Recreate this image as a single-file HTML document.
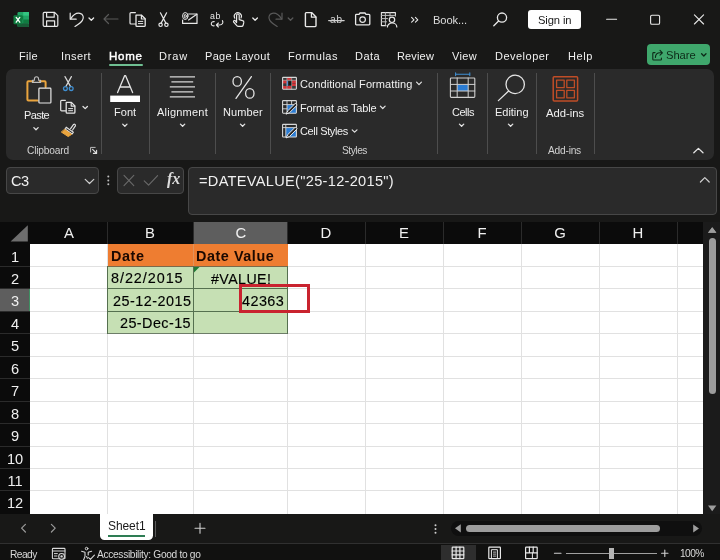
<!DOCTYPE html><html><head><meta charset="utf-8"><title>Excel</title><style>
html,body{margin:0;padding:0}body{width:720px;height:560px;overflow:hidden;position:relative;background:#181817;font-family:"Liberation Sans",sans-serif;}
.t{position:absolute;white-space:nowrap;line-height:20px;height:20px;will-change:transform;}
.a{position:absolute}svg{position:absolute;overflow:visible}
</style></head><body>
<!-- ribbon panel -->
<div class="a" style="left:6px;top:68.5px;width:708px;height:91px;border-radius:7px;background:#2a2a2a"></div>
<!-- home underline -->
<div class="a" style="left:109px;top:63.8px;width:34.2px;height:2px;border-radius:1px;background:#6fbf92"></div>
<!-- share -->
<div class="a" style="left:646.7px;top:44px;width:63.5px;height:21px;border-radius:4px;background:#3fa76c"></div>
<!-- sign in -->
<div class="a" style="left:528px;top:10px;width:52.5px;height:19px;border-radius:3px;background:#ffffff"></div>
<!-- ribbon separators -->
<div class="a" style="left:100.5px;top:72.5px;width:1px;height:81.5px;background:#4d4d4d"></div>
<div class="a" style="left:149px;top:72.5px;width:1px;height:81.5px;background:#4d4d4d"></div>
<div class="a" style="left:215px;top:72.5px;width:1px;height:81.5px;background:#4d4d4d"></div>
<div class="a" style="left:270px;top:72.5px;width:1px;height:81.5px;background:#4d4d4d"></div>
<div class="a" style="left:437px;top:72.5px;width:1px;height:81.5px;background:#4d4d4d"></div>
<div class="a" style="left:487px;top:72.5px;width:1px;height:81.5px;background:#4d4d4d"></div>
<div class="a" style="left:536px;top:72.5px;width:1px;height:81.5px;background:#4d4d4d"></div>
<div class="a" style="left:594px;top:72.5px;width:1px;height:81.5px;background:#4d4d4d"></div>
<!-- name box / fx box / formula box -->
<div class="a" style="left:6px;top:167px;width:91px;height:24.5px;border:1px solid #474747;border-radius:4px;background:#2a2a2a"></div>
<div class="a" style="left:117px;top:167px;width:65.3px;height:24.5px;border:1px solid #474747;border-radius:4px;background:#2a2a2a"></div>
<div class="a" style="left:188px;top:167.2px;width:526.5px;height:46.3px;border:1px solid #474747;border-radius:4px;background:#2a2a2a"></div>
<!-- grid -->
<div class="a" style="left:0;top:222px;width:702.7px;height:292px;background:#0b0b0b"></div>
<div class="a" style="left:29.5px;top:244px;width:673.2px;height:270px;background:#ffffff"></div>
<!-- selected headers -->
<div class="a" style="left:193.3px;top:222px;width:94.4px;height:21.5px;background:#5e5e5e"></div>
<div class="a" style="left:0;top:289px;width:29.5px;height:22.4px;background:#5e5e5e"></div>
<!-- scroll area right -->
<div class="a" style="left:702.7px;top:222px;width:17.3px;height:292px;background:#1b1b1b"></div>
<div class="a" style="left:708.5px;top:238px;width:7.5px;height:156px;border-radius:4px;background:#9d9d9d"></div>
<!-- sheet tab -->
<div class="a" style="left:99.9px;top:513.5px;width:53.5px;height:26.7px;border-radius:0 0 4.5px 4.5px;background:#ffffff"></div>
<div class="a" style="left:108.1px;top:535.2px;width:37px;height:1.9px;background:#2e7d54"></div>
<div class="a" style="left:155.4px;top:520.5px;width:1px;height:16px;background:#5a5a5a"></div>
<!-- hscroll -->
<div class="a" style="left:450.8px;top:520.6px;width:251.7px;height:15.6px;border-radius:8px;background:#0f0f0f"></div>
<div class="a" style="left:466px;top:524.6px;width:194px;height:7.5px;border-radius:4px;background:#9d9d9d"></div>
<!-- status bar -->
<div class="a" style="left:0;top:543.5px;width:720px;height:16.5px;background:#111110"></div><div class="a" style="left:0;top:543px;width:720px;height:1px;background:#303030"></div>
<div class="a" style="left:441px;top:545px;width:35px;height:15px;background:#2e2e2e"></div>
<div class="a" style="left:566px;top:552.7px;width:91px;height:1px;background:#a0a0a0"></div>
<div class="a" style="left:609.3px;top:547.9px;width:4.7px;height:11px;background:#b5b5b5"></div>
<div class="a" style="left:107.00px;top:244.00px;width:1.00px;height:270.00px;background:#e1e1e1;"></div>
<div class="a" style="left:107.00px;top:222.00px;width:1.00px;height:21.70px;background:#2b2b2b;"></div>
<div class="a" style="left:192.80px;top:244.00px;width:1.00px;height:270.00px;background:#e1e1e1;"></div>
<div class="a" style="left:192.80px;top:222.00px;width:1.00px;height:21.70px;background:#2b2b2b;"></div>
<div class="a" style="left:287.20px;top:244.00px;width:1.00px;height:270.00px;background:#e1e1e1;"></div>
<div class="a" style="left:287.20px;top:222.00px;width:1.00px;height:21.70px;background:#2b2b2b;"></div>
<div class="a" style="left:364.50px;top:244.00px;width:1.00px;height:270.00px;background:#e1e1e1;"></div>
<div class="a" style="left:364.50px;top:222.00px;width:1.00px;height:21.70px;background:#2b2b2b;"></div>
<div class="a" style="left:442.50px;top:244.00px;width:1.00px;height:270.00px;background:#e1e1e1;"></div>
<div class="a" style="left:442.50px;top:222.00px;width:1.00px;height:21.70px;background:#2b2b2b;"></div>
<div class="a" style="left:520.50px;top:244.00px;width:1.00px;height:270.00px;background:#e1e1e1;"></div>
<div class="a" style="left:520.50px;top:222.00px;width:1.00px;height:21.70px;background:#2b2b2b;"></div>
<div class="a" style="left:598.50px;top:244.00px;width:1.00px;height:270.00px;background:#e1e1e1;"></div>
<div class="a" style="left:598.50px;top:222.00px;width:1.00px;height:21.70px;background:#2b2b2b;"></div>
<div class="a" style="left:676.50px;top:244.00px;width:1.00px;height:270.00px;background:#e1e1e1;"></div>
<div class="a" style="left:676.50px;top:222.00px;width:1.00px;height:21.70px;background:#2b2b2b;"></div>
<div class="a" style="left:29.50px;top:265.95px;width:673.20px;height:1.00px;background:#e1e1e1;"></div>
<div class="a" style="left:0.00px;top:265.95px;width:29.50px;height:1.00px;background:#2b2b2b;"></div>
<div class="a" style="left:29.50px;top:288.40px;width:673.20px;height:1.00px;background:#e1e1e1;"></div>
<div class="a" style="left:0.00px;top:288.40px;width:29.50px;height:1.00px;background:#2b2b2b;"></div>
<div class="a" style="left:29.50px;top:310.85px;width:673.20px;height:1.00px;background:#e1e1e1;"></div>
<div class="a" style="left:0.00px;top:310.85px;width:29.50px;height:1.00px;background:#2b2b2b;"></div>
<div class="a" style="left:29.50px;top:333.30px;width:673.20px;height:1.00px;background:#e1e1e1;"></div>
<div class="a" style="left:0.00px;top:333.30px;width:29.50px;height:1.00px;background:#2b2b2b;"></div>
<div class="a" style="left:29.50px;top:355.75px;width:673.20px;height:1.00px;background:#e1e1e1;"></div>
<div class="a" style="left:0.00px;top:355.75px;width:29.50px;height:1.00px;background:#2b2b2b;"></div>
<div class="a" style="left:29.50px;top:378.20px;width:673.20px;height:1.00px;background:#e1e1e1;"></div>
<div class="a" style="left:0.00px;top:378.20px;width:29.50px;height:1.00px;background:#2b2b2b;"></div>
<div class="a" style="left:29.50px;top:400.65px;width:673.20px;height:1.00px;background:#e1e1e1;"></div>
<div class="a" style="left:0.00px;top:400.65px;width:29.50px;height:1.00px;background:#2b2b2b;"></div>
<div class="a" style="left:29.50px;top:423.10px;width:673.20px;height:1.00px;background:#e1e1e1;"></div>
<div class="a" style="left:0.00px;top:423.10px;width:29.50px;height:1.00px;background:#2b2b2b;"></div>
<div class="a" style="left:29.50px;top:445.55px;width:673.20px;height:1.00px;background:#e1e1e1;"></div>
<div class="a" style="left:0.00px;top:445.55px;width:29.50px;height:1.00px;background:#2b2b2b;"></div>
<div class="a" style="left:29.50px;top:468.00px;width:673.20px;height:1.00px;background:#e1e1e1;"></div>
<div class="a" style="left:0.00px;top:468.00px;width:29.50px;height:1.00px;background:#2b2b2b;"></div>
<div class="a" style="left:29.50px;top:490.45px;width:673.20px;height:1.00px;background:#e1e1e1;"></div>
<div class="a" style="left:0.00px;top:490.45px;width:29.50px;height:1.00px;background:#2b2b2b;"></div>
<div class="a" style="left:107.50px;top:244.00px;width:180.20px;height:22.20px;background:#ee7d31;"></div>
<div class="a" style="left:107.50px;top:266.20px;width:180.20px;height:67.60px;background:#c6e0b4;"></div>
<div class="a" style="left:107.00px;top:266.00px;width:181.00px;height:1.00px;background:#7a6a4a;"></div>
<div class="a" style="left:107.00px;top:288.30px;width:181.00px;height:1.00px;background:#55704f;"></div>
<div class="a" style="left:107.00px;top:311.00px;width:181.00px;height:1.00px;background:#55704f;"></div>
<div class="a" style="left:107.00px;top:333.30px;width:181.00px;height:1.00px;background:#6d7d68;"></div>
<div class="a" style="left:107.00px;top:266.20px;width:1.00px;height:67.60px;background:#55704f;"></div>
<div class="a" style="left:193.00px;top:266.20px;width:1.00px;height:67.60px;background:#55704f;"></div>
<div class="a" style="left:287.20px;top:266.20px;width:1.00px;height:67.60px;background:#55704f;"></div>
<div class="a" style="left:193.00px;top:244.00px;width:1.00px;height:22.20px;background:#e0915a;"></div>
<div class="a" style="left:28.50px;top:289.00px;width:1.20px;height:22.40px;background:#3f8f62;"></div>
<svg style="left:193.6px;top:266.6px" width="6" height="6" viewBox="0 0 6 6"><path d="M0 0H5.5L0 5.5Z" fill="#1f7a35"/></svg>
<div class="a" style="left:238.7px;top:283.8px;width:65.3px;height:22.9px;border:3px solid #c9232f"></div><svg style="left:0;top:0" width="720" height="68" viewBox="0 0 720 68" fill="none" stroke="#e8e8e8" stroke-width="1.2" stroke-linecap="round" stroke-linejoin="round">
<!-- excel logo -->
<g stroke="none">
<rect x="17.5" y="12" width="11.5" height="15" rx="1.2" fill="#21a366"/>
<rect x="23.2" y="12" width="5.8" height="3.8" fill="#33c481"/>
<rect x="23.2" y="15.8" width="5.8" height="3.7" fill="#21a366"/>
<rect x="17.5" y="15.8" width="5.7" height="3.7" fill="#107c41"/>
<rect x="23.2" y="19.5" width="5.8" height="3.7" fill="#107c41"/>
<rect x="17.5" y="23.2" width="11.5" height="3.8" rx="1" fill="#185c37"/>
<rect x="13.5" y="15.3" width="9" height="9" rx="1" fill="#107c41"/>
</g>
<path d="M16.2 17.4L19.8 22.2M19.8 17.4L16.2 22.2" stroke="#fff" stroke-width="1.3"/>
<!-- save -->
<path d="M43.2 13.6a1.2 1.2 0 0 1 1.2-1.2H54.6L57.8 15.6V25.2a1.2 1.2 0 0 1-1.2 1.2H44.4a1.2 1.2 0 0 1-1.2-1.2Z"/>
<path d="M46.6 12.6V17.2H54.2V12.6"/>
<path d="M46.6 26.2V20.8H54.6V26.2"/>
<!-- undo -->
<path d="M70.2 13.2V19.2H76.2"/>
<path d="M70.6 18.8C73.5 14.6 77 12.6 80 13.4C83.2 14.2 84.2 17.6 82.4 20.4C80.8 22.8 78 24.6 75 26.4"/>
<path d="M89 18L91.3 20.3L93.6 18" stroke-width="1.3"/>
<!-- back arrow grey -->
<path d="M104 19H118M108.5 14.5L104 19L108.5 23.5" stroke="#595959"/>
<!-- copy -->
<path d="M135.6 24H131a1 1 0 0 1-1-1V13.6a1 1 0 0 1 1-1H135.4"/>
<path d="M136 15.2H141.6L145.2 18.8V25.4a1 1 0 0 1-1 1H137a1 1 0 0 1-1-1Z" stroke-width="1.3"/>
<path d="M141.4 15.4V19H145"/>
<path d="M138.4 21.4H142.8M138.4 23.6H142.8" stroke-width="1"/>
<!-- cut -->
<path d="M160.4 12.8L166 23.4M166.6 12.8L161 23.4"/>
<circle cx="160.6" cy="24.8" r="1.7"/>
<circle cx="166.4" cy="24.8" r="1.7"/>
<!-- email attach -->
<path d="M188.6 14H197V23.4H182.6V20"/>
<path d="M196.8 14.2L188.6 20"/>
<ellipse cx="185.3" cy="16" rx="2.7" ry="3.5" stroke-width="1"/>
<ellipse cx="185.3" cy="16.2" rx="1" ry="1.9" stroke-width=".9"/>
</svg>
<div class="t" style="left:210.4px;top:6.1px;font-size:8.8px;color:#e8e8e8;letter-spacing:0.6px;line-height:20px">ab</div>
<div class="t" style="left:330.4px;top:8.9px;font-size:10.6px;color:#cfcfcf;letter-spacing:0.4px;line-height:20px">ab</div>
<svg style="left:0;top:0" width="720" height="68" viewBox="0 0 720 68" fill="none" stroke="#e8e8e8" stroke-width="1.2" stroke-linecap="round" stroke-linejoin="round">
<!-- ab replace arrows -->
<path d="M214.2 21.6C212.2 21.4 211.3 22.6 211.3 23.7C211.3 25 212.4 26 214.2 25.8" stroke-width="1.1"/>
<path d="M222.4 20.6C223.6 22.6 222.6 25 219.4 25H216.6M218.4 23L216.4 25L218.4 27" stroke-width="1.1"/>
<!-- touch -->
<path d="M236.6 22.6V15.2a1.3 1.3 0 0 1 2.6 0V19.6L242.6 20.6a1.6 1.6 0 0 1 1.2 1.8L243.2 25a1.8 1.8 0 0 1-1.8 1.4H238.4a2 2 0 0 1-1.6-.8L233.6 22a1.1 1.1 0 0 1 1.6-1.4Z"/>
<path d="M234.8 18.2a3.6 3.6 0 1 1 6.2-.2" stroke-width="1.1"/>
<path d="M252.8 18L255.1 20.3L257.4 18" stroke-width="1.3"/>
<!-- redo grey -->
<path d="M282 13.2V19.2H276" stroke="#595959"/>
<path d="M281.6 18.8C278.7 14.6 275.2 12.6 272.2 13.4C269 14.2 268 17.6 269.8 20.4C271.4 22.8 274.2 24.6 277.2 26.4" stroke="#595959"/>
<path d="M288.2 18L290.5 20.3L292.8 18" stroke="#595959" stroke-width="1.3"/>
<!-- new doc -->
<path d="M305.4 13.4a.8 .8 0 0 1 .8-.8H311.6L316 17V25.8a.8 .8 0 0 1-.8 .8H306.2a.8 .8 0 0 1-.8-.8Z" stroke-width="1.4"/>
<path d="M311.4 12.8V17.2H315.8"/>
<!-- strikethrough line -->
<path d="M328.6 20.6H344.2" stroke="#cfcfcf" stroke-width="1.1"/>
<!-- camera -->
<path d="M355.6 15.2a.8 .8 0 0 1 .8-.8H359L360 13H365L366 14.4H369a.8 .8 0 0 1 .8 .8V24a.8 .8 0 0 1-.8 .8H356.4a.8 .8 0 0 1-.8-.8Z" stroke-width="1.3"/>
<circle cx="362.6" cy="19.6" r="2.8"/>
<!-- table person -->
<path d="M386 25.6H381.4V12.6H395.4V16" stroke-width="1.1"/>
<path d="M381.4 15.4H395.4M381.4 18.6H387.5M381.4 21.8H386.5M385.4 12.6V25.6M390 12.6V16.2" stroke-width="1" stroke="#bdbdbd"/>
<circle cx="392" cy="19.8" r="2.7"/>
<path d="M387.4 27a4.7 4 0 0 1 9.4 0"/>
<!-- >> -->
<path d="M411.6 17.4L414 19.8L411.6 22.2M415.4 17.4L417.8 19.8L415.4 22.2" stroke-width="1.1"/>
<!-- search -->
<circle cx="502" cy="17.6" r="4.6" stroke-width="1.3"/>
<path d="M498.6 21L493.8 25.8" stroke-width="1.3"/>
<!-- window controls -->
<path d="M606.6 19.2H616.6" stroke-width="1.1"/>
<rect x="650.6" y="15.2" width="9" height="9" rx="1.3" stroke-width="1.1"/>
<path d="M694.4 14.8L703.6 24M703.6 14.8L694.4 24" stroke-width="1.1"/>
<!-- share icon -->
<g stroke="#0d2a18" stroke-width="1.1">
<path d="M655 52.6H653.6a.8 .8 0 0 0-.8 .8V59.2a.8 .8 0 0 0 .8 .8H660.6a.8 .8 0 0 0 .8-.8V58"/>
<path d="M655.4 57.4C655.6 54.6 657.4 52.8 660 52.8H662.2M660 50.4L662.4 52.8L660 55.2"/>
<path d="M701.6 53.8L703.8 56L706 53.8" stroke-width="1.3"/>
</g>
</svg>
<svg style="left:0;top:68px" width="720" height="150" viewBox="0 68 720 150" fill="none" stroke="#e4e4e4" stroke-width="1.2" stroke-linecap="round" stroke-linejoin="round">
<!-- paste -->
<path d="M33 81.3H28.4a1 1 0 0 0-1 1V99.6a1 1 0 0 0 1 1H37.6M40 81.3H44.6a1 1 0 0 1 1 1V87" stroke="#e9a43e" stroke-width="2"/>
<path d="M32.4 82.4V80.2H34.4V79.2a2.1 2.4 0 0 1 4.2 0V80.2H40.6V82.4Z" stroke="#bdbdbd" stroke-width="1.1"/>
<rect x="38.9" y="88.2" width="12" height="14.8" rx=".8" fill="#2a2a2a" stroke="#e8e8e8" stroke-width="1.2"/>
<path d="M33.85 127.65L36.00 129.75L38.15 127.65" stroke-width="1.3"/>
<!-- scissors -->
<path d="M65 76.6L70.6 86.6M71.4 76.6L65.8 86.6" stroke="#d8d8d8"/>
<circle cx="65.4" cy="88.6" r="1.9" stroke="#3f8fd2" stroke-width="1.3"/>
<circle cx="71.2" cy="88.6" r="1.9" stroke="#3f8fd2" stroke-width="1.3"/>
<!-- copy -->
<path d="M65.6 110.8H61.6a.9 .9 0 0 1-.9-.9V101.2a.9 .9 0 0 1 .9-.9H65.4" stroke-width="1.2"/>
<path d="M66.2 102.4H71.4L74.9 105.9V112.2a.9 .9 0 0 1-.9 .9H67.1a.9 .9 0 0 1-.9-.9Z" stroke-width="1.3"/>
<path d="M71.2 102.6V106.1H74.7"/>
<path d="M68.6 108.6H72.6M68.6 110.7H72.6" stroke-width="1"/>
<path d="M83 106.5L85.2 108.6L87.4 106.5" stroke-width="1.3"/>
<!-- format painter -->
<path d="M70.6 128.6L73.6 124.4a1.2 1.2 0 0 1 1.8 1.4L72.6 130" stroke="#e0e0e0" stroke-width="1.2"/>
<path d="M66.2 127.2L73.4 132.2L72.2 134L65 129Z" stroke="#e0e0e0" stroke-width="1.1"/>
<path d="M64.8 129.6L71.6 134.4L68.2 136.6L61.6 132.2Z" fill="#e9a43e" stroke="#e9a43e" stroke-width="1"/>
<!-- dialog launcher -->
<path d="M90.6 152V147.4H95.2" stroke="#bdbdbd" stroke-width="1"/>
<path d="M92.6 149.4L96.4 153.2M96.6 150.2V153.4H93.4" stroke="#e0e0e0" stroke-width="1.1"/>
<!-- font A -->
<path d="M117.6 92.6L124.7 75.6H125.5L132.6 92.6M120 87H130.2" stroke-width="1.3"/>
<rect x="110.2" y="95.6" width="29.8" height="6.4" fill="#ffffff" stroke="none"/>
<path d="M122.70 124.15L124.85 126.25L127.00 124.15" stroke-width="1.3"/>
<!-- alignment -->
<path d="M169.8 76.8H195M171.4 81.8H193.2M169.8 86.9H195M171.4 91.9H193.2M169.8 96.8H195" stroke="#d6d6d6" stroke-width="1.2" stroke-linecap="butt"/>
<path d="M180.45 124.15L182.60 126.25L184.75 124.15" stroke-width="1.3"/>
<!-- percent -->
<ellipse cx="237.2" cy="81.4" rx="4.2" ry="4.8" stroke-width="1.3"/>
<ellipse cx="249.8" cy="93.4" rx="4.2" ry="4.8" stroke-width="1.3"/>
<path d="M251.4 76.6L236 98.4" stroke-width="1.3"/>
<path d="M240.45 124.15L242.60 126.25L244.75 124.15" stroke-width="1.3"/>
<!-- conditional formatting -->
<g stroke="none">
<rect x="282.6" y="77.4" width="13.8" height="11.8" fill="#3a3a3a"/>
<rect x="283" y="80.4" width="3.6" height="3" fill="#d13438"/>
<rect x="283" y="86" width="3.6" height="3" fill="#d13438"/>
<rect x="287.2" y="77.8" width="4.2" height="2.4" fill="#d13438"/>
<rect x="287.2" y="86" width="4.2" height="3" fill="#d13438"/>
<rect x="292" y="80.4" width="4" height="3" fill="#d13438"/>
<rect x="292" y="83.6" width="4" height="2.4" fill="#d13438"/>
<rect x="286.8" y="81" width="1.2" height="5" fill="#3f7fd0"/>
<rect x="288.6" y="81.4" width="3.2" height="3.6" fill="#151515"/>
</g>
<rect x="282.6" y="77.4" width="13.8" height="11.8" rx=".6" stroke="#d8d8d8" stroke-width="1.1"/>
<path d="M282.6 80.3H296.4M286.9 77.4V89.2M291.7 77.4V89.2" stroke="#d8d8d8" stroke-width=".7" opacity=".7"/>
<!-- format as table -->
<g>
<rect x="287" y="105" width="9.4" height="8.2" fill="#2b7cd3" stroke="none"/>
<rect x="282.6" y="100.6" width="13.8" height="12.6" rx=".6" stroke="#d8d8d8" stroke-width="1.1"/>
<path d="M282.6 104.6H296.4M282.6 108.8H287M287 100.6V113.2M291.6 100.6V104.6" stroke="#d8d8d8" stroke-width=".9"/>
<path d="M286.2 113.8L288 110.6L295.4 103.2L297.2 105L289.8 112.4Z" fill="#2a2a2a" stroke="#e8e8e8" stroke-width="1"/>
</g>
<!-- cell styles -->
<g>
<rect x="285.8" y="127.6" width="10.6" height="9.4" fill="#2b7cd3" stroke="none"/>
<rect x="282.6" y="124.4" width="13.8" height="12.6" rx=".6" stroke="#d8d8d8" stroke-width="1.1"/>
<path d="M282.6 127.6H296.4M285.8 124.4V137" stroke="#d8d8d8" stroke-width=".9"/>
<path d="M286.2 137.6L288 134.4L295.4 127L297.2 128.8L289.8 136.2Z" fill="#2a2a2a" stroke="#e8e8e8" stroke-width="1"/>
</g>
<path d="M416.60 82.20L419.00 84.60L421.40 82.20M380.35 106.10L382.75 108.50L385.15 106.10M352.20 129.80L354.60 132.20L357.00 129.80" stroke-width="1.2"/>
<!-- cells -->
<rect x="457.2" y="84.6" width="11" height="6.4" fill="#2b7cd3" stroke="none"/>
<rect x="450.4" y="78" width="24.4" height="19.4" rx=".8" stroke="#d0d0d0" stroke-width="1.1"/>
<path d="M450.4 84.4H474.8M450.4 91H474.8M457.2 78V97.4M468.2 78V97.4" stroke="#d0d0d0" stroke-width="1"/>
<path d="M455.6 74.2H469.8M455.6 72.8V75.6M469.8 72.8V75.6" stroke="#3f8fd2" stroke-width="1.1"/>
<path d="M459.45 124.15L461.60 126.25L463.75 124.15" stroke-width="1.3"/>
<!-- editing magnifier -->
<circle cx="515.2" cy="84.4" r="9.2" stroke-width="1.3"/>
<path d="M508.6 91L498.4 100.6" stroke-width="1.3"/>
<path d="M508.45 124.15L510.60 126.25L512.75 124.15" stroke-width="1.3"/>
<!-- add-ins -->
<g stroke="#c04d27" stroke-width="1.5">
<rect x="553.2" y="76.8" width="24.4" height="24.2" rx="1"/>
<rect x="556.6" y="80.2" width="7.6" height="7.4" stroke-width="1.3"/>
<rect x="566.8" y="80.2" width="7.6" height="7.4" stroke-width="1.3"/>
<rect x="556.6" y="90.4" width="7.6" height="7.4" stroke-width="1.3"/>
<rect x="566.8" y="90.4" width="7.6" height="7.4" stroke-width="1.3"/>
</g>
<!-- collapse chevron -->
<path d="M693.8 152.8L698.4 148.4L703 152.8" stroke-width="1.3"/>
<!-- name box chevron -->
<path d="M85.2 179.4L89.5 183.5L93.8 179.4" stroke="#d0d0d0" stroke-width="1.2"/>
<!-- dots -->
<g fill="#bdbdbd" stroke="none"><circle cx="108.3" cy="176.6" r="1"/><circle cx="108.3" cy="180.4" r="1"/><circle cx="108.3" cy="184.2" r="1"/></g>
<!-- x, check -->
<path d="M124 175.4L133.8 185.6M133.8 175.4L124 185.6" stroke="#6a6a6a" stroke-width="1.1"/>
<path d="M144.2 180.8L148.6 185.2L157.6 175.6" stroke="#6a6a6a" stroke-width="1.1"/>
<!-- formula bar chevron -->
<path d="M700.4 182L704.8 177.6L709.2 182" stroke="#d0d0d0" stroke-width="1.2"/>
</svg>
<div class="t" style="left:166.6px;top:168.7px;font-family:'Liberation Serif',serif;font-style:italic;font-weight:700;font-size:16px;color:#dcdcdc;line-height:20px;letter-spacing:-0.2px">fx</div>
<svg style="left:0;top:510px" width="720" height="50" viewBox="0 510 720 50" fill="none" stroke="#d8d8d8" stroke-width="1.2" stroke-linecap="round" stroke-linejoin="round">
<!-- vertical scroll arrows -->
<path d="M708 232.8L712.2 227.2L716.4 232.8Z" fill="#9d9d9d" stroke="none"/>
<!-- sheet nav -->
<path d="M25.4 524.4L21.6 528.2L25.4 532" stroke="#9a9a9a" stroke-width="1.2"/>
<path d="M51.4 524.4L55.2 528.2L51.4 532" stroke="#9a9a9a" stroke-width="1.2"/>
<path d="M195 528.2H205M200 523.2V533.2" stroke="#cfcfcf" stroke-width="1.1"/>
<!-- dots -->
<g fill="#d0d0d0" stroke="none"><circle cx="435.5" cy="525.3" r="1"/><circle cx="435.5" cy="529" r="1"/><circle cx="435.5" cy="532.7" r="1"/></g>
<!-- hscroll arrows -->
<path d="M460.8 524.2V532.5L455 528.35Z" fill="#9d9d9d" stroke="none"/>
<path d="M693.2 524.4V532.4L699 528.4Z" fill="#9d9d9d" stroke="none"/>
<!-- macro icon -->
<rect x="52.4" y="548.4" width="12.6" height="10.4" rx=".8" stroke-width="1.1"/>
<path d="M52.4 551H65M54.4 553.6H57.4M54.4 556H57" stroke-width="1"/>
<circle cx="61.6" cy="556.4" r="2.9" fill="#151515" stroke-width="1.1"/>
<circle cx="61.6" cy="556.4" r="1.2" fill="#d8d8d8" stroke="none"/>
<!-- accessibility -->
<circle cx="86.6" cy="548.6" r="1.3" stroke-width="1"/>
<path d="M81.6 551.2L85 552.2V556.4L83.4 560.4M91.6 551.2L88.2 552.2V555M86.6 556.6L87.4 558.2" stroke-width="1.1"/>
<path d="M88.6 557.6L90.4 559.4L94.4 555.2" stroke-width="1.1"/>
<!-- view icons -->
<g stroke="#e8e8e8" stroke-width="1.2" transform="translate(0,-0.9)">
<rect x="452.2" y="548" width="11.6" height="11.6" rx=".6"/>
<path d="M456.1 548V559.6M459.9 548V559.6M452.2 551.9H463.8M452.2 555.7H463.8"/>
<rect x="488.8" y="548" width="11.6" height="11.6" rx=".6"/>
<rect x="491.8" y="550.6" width="5.6" height="9" stroke-width="1"/>
<path d="M493.4 553H495.8M493.4 555H495.8M493.4 557H495.8" stroke-width=".8"/>
<rect x="525.6" y="548" width="11.6" height="11.6" rx=".6"/>
<path d="M529.4 548V553.6M533.2 548V553.6M525.6 553.8H537.2" />
<path d="M532.4 553.8V559.6" stroke-width="1"/>
</g>
<!-- zoom - + -->
<path d="M554.4 553.2H561" stroke="#d0d0d0" stroke-width="1.1"/>
<path d="M661.6 553.2H668M664.8 550V556.4" stroke="#d0d0d0" stroke-width="1.1"/>
</svg>
<svg style="left:700px;top:220px" width="20" height="300" viewBox="700 220 20 300"><path d="M708 232.8L712.2 227.2L716.4 232.8Z" fill="#9d9d9d"/><path d="M708 505.6L712.2 511.2L716.4 505.6Z" fill="#9d9d9d"/></svg>
<svg style="left:0;top:220px" width="30" height="24" viewBox="0 220 30 24"><path d="M27.8 225.2V241.6H10.6Z" fill="#6e6e6e"/></svg>

<div class="t" style="font-size:11.0px;color:#f0f0f0;top:45.70px;left:18.50px;letter-spacing:0.316px;">File</div>
<div class="t" style="font-size:11.0px;color:#f0f0f0;top:45.70px;left:60.50px;letter-spacing:0.414px;">Insert</div>
<div class="t" style="font-size:11.0px;color:#f0f0f0;top:45.70px;left:158.50px;letter-spacing:0.832px;">Draw</div>
<div class="t" style="font-size:11.0px;color:#f0f0f0;top:45.70px;left:204.50px;letter-spacing:0.293px;">Page Layout</div>
<div class="t" style="font-size:11.0px;color:#f0f0f0;top:45.70px;left:287.50px;letter-spacing:0.520px;">Formulas</div>
<div class="t" style="font-size:11.0px;color:#f0f0f0;top:45.70px;left:354.50px;letter-spacing:0.438px;">Data</div>
<div class="t" style="font-size:11.0px;color:#f0f0f0;top:45.70px;left:396.50px;letter-spacing:0.154px;">Review</div>
<div class="t" style="font-size:11.0px;color:#f0f0f0;top:45.70px;left:451.50px;letter-spacing:0.336px;">View</div>
<div class="t" style="font-size:11.0px;color:#f0f0f0;top:45.70px;left:494.50px;letter-spacing:0.484px;">Developer</div>
<div class="t" style="font-size:11.0px;color:#f0f0f0;top:45.70px;left:567.50px;letter-spacing:0.594px;">Help</div>
<div class="t" style="font-size:11.5px;color:#ffffff;top:45.70px;left:108.80px;-webkit-text-stroke:0.45px #fff;letter-spacing:0.778px;">Home</div>
<div class="t" style="font-size:11.2px;color:#0d2a18;top:45.20px;left:665.80px;letter-spacing:-0.032px;">Share</div>
<div class="t" style="font-size:11.2px;color:#dcdcdc;top:9.70px;left:432.75px;letter-spacing:-0.118px;">Book...</div>
<div class="t" style="font-size:11.2px;color:#1a1a1a;top:9.50px;left:537.50px;letter-spacing:-0.103px;">Sign in</div>
<div class="t" style="font-size:11.0px;color:#f0f0f0;top:105.00px;left:23.60px;letter-spacing:-0.608px;">Paste</div>
<div class="t" style="font-size:11.0px;color:#f0f0f0;top:101.80px;left:114.20px;letter-spacing:0.021px;">Font</div>
<div class="t" style="font-size:11.0px;color:#f0f0f0;top:102.00px;left:157.00px;letter-spacing:0.231px;">Alignment</div>
<div class="t" style="font-size:11.0px;color:#f0f0f0;top:102.00px;left:223.25px;letter-spacing:0.104px;">Number</div>
<div class="t" style="font-size:11.0px;color:#f0f0f0;top:102.00px;left:451.50px;letter-spacing:-0.491px;">Cells</div>
<div class="t" style="font-size:11.0px;color:#f0f0f0;top:102.00px;left:494.50px;letter-spacing:-0.020px;">Editing</div>
<div class="t" style="font-size:11.3px;color:#f0f0f0;top:103.00px;left:545.50px;letter-spacing:-0.045px;">Add-ins</div>
<div class="t" style="font-size:11.0px;color:#f0f0f0;top:73.75px;left:300.00px;letter-spacing:0.083px;">Conditional Formatting</div>
<div class="t" style="font-size:11.0px;color:#f0f0f0;top:97.50px;left:300.00px;letter-spacing:-0.145px;">Format as Table</div>
<div class="t" style="font-size:11.0px;color:#f0f0f0;top:121.00px;left:300.00px;letter-spacing:-0.361px;">Cell Styles</div>
<div class="t" style="font-size:10.2px;color:#d0d0d0;top:141.00px;left:26.50px;letter-spacing:-0.179px;">Clipboard</div>
<div class="t" style="font-size:10.2px;color:#d0d0d0;top:141.00px;left:341.50px;letter-spacing:-0.458px;">Styles</div>
<div class="t" style="font-size:10.2px;color:#d0d0d0;top:141.00px;left:548.25px;letter-spacing:-0.221px;">Add-ins</div>
<div class="t" style="font-size:14.6px;color:#f0f0f0;top:170.80px;left:10.50px;letter-spacing:-0.428px;">C3</div>
<div class="t" style="font-size:14.6px;color:#f0f0f0;top:171.00px;left:198.80px;letter-spacing:0.297px;">=DATEVALUE(&quot;25-12-2015&quot;)</div>
<div class="t" style="font-size:14.9px;color:#f0f0f0;top:223.30px;left:38.50px;width:60px;text-align:center;">A</div>
<div class="t" style="font-size:14.9px;color:#f0f0f0;top:223.30px;left:120.40px;width:60px;text-align:center;">B</div>
<div class="t" style="font-size:14.9px;color:#f0f0f0;top:223.30px;left:210.50px;width:60px;text-align:center;">C</div>
<div class="t" style="font-size:14.9px;color:#f0f0f0;top:223.30px;left:296.35px;width:60px;text-align:center;">D</div>
<div class="t" style="font-size:14.9px;color:#f0f0f0;top:223.30px;left:374.00px;width:60px;text-align:center;">E</div>
<div class="t" style="font-size:14.9px;color:#f0f0f0;top:223.30px;left:452.00px;width:60px;text-align:center;">F</div>
<div class="t" style="font-size:14.9px;color:#f0f0f0;top:223.30px;left:530.00px;width:60px;text-align:center;">G</div>
<div class="t" style="font-size:14.9px;color:#f0f0f0;top:223.30px;left:608.00px;width:60px;text-align:center;">H</div>
<div class="t" style="font-size:14.6px;color:#f0f0f0;top:246.52px;left:-15.50px;width:60px;text-align:center;">1</div>
<div class="t" style="font-size:14.6px;color:#f0f0f0;top:268.98px;left:-15.50px;width:60px;text-align:center;">2</div>
<div class="t" style="font-size:14.6px;color:#f0f0f0;top:291.43px;left:-15.50px;width:60px;text-align:center;">3</div>
<div class="t" style="font-size:14.6px;color:#f0f0f0;top:313.88px;left:-15.50px;width:60px;text-align:center;">4</div>
<div class="t" style="font-size:14.6px;color:#f0f0f0;top:336.32px;left:-15.50px;width:60px;text-align:center;">5</div>
<div class="t" style="font-size:14.6px;color:#f0f0f0;top:358.78px;left:-15.50px;width:60px;text-align:center;">6</div>
<div class="t" style="font-size:14.6px;color:#f0f0f0;top:381.22px;left:-15.50px;width:60px;text-align:center;">7</div>
<div class="t" style="font-size:14.6px;color:#f0f0f0;top:403.68px;left:-15.50px;width:60px;text-align:center;">8</div>
<div class="t" style="font-size:14.6px;color:#f0f0f0;top:426.12px;left:-15.50px;width:60px;text-align:center;">9</div>
<div class="t" style="font-size:14.6px;color:#f0f0f0;top:448.57px;left:-15.50px;width:60px;text-align:center;">10</div>
<div class="t" style="font-size:14.6px;color:#f0f0f0;top:471.03px;left:-15.50px;width:60px;text-align:center;">11</div>
<div class="t" style="font-size:14.6px;color:#f0f0f0;top:493.48px;left:-15.50px;width:60px;text-align:center;">12</div>
<div class="t" style="font-size:14.4px;color:#1c0900;top:246.00px;font-weight:700;left:110.75px;letter-spacing:0.612px;">Date</div>
<div class="t" style="font-size:14.4px;color:#1c0900;top:246.00px;font-weight:700;left:196.20px;letter-spacing:0.550px;">Date Value</div>
<div class="t" style="font-size:14.4px;color:#000000;top:268.40px;left:110.75px;-webkit-text-stroke:0.15px #000;letter-spacing:0.947px;">8/22/2015</div>
<div class="t" style="font-size:14.2px;color:#000000;top:268.90px;left:210.50px;-webkit-text-stroke:0.15px #000;letter-spacing:0.441px;">#VALUE!</div>
<div class="t" style="font-size:14.4px;color:#000000;top:290.50px;left:112.80px;-webkit-text-stroke:0.15px #000;letter-spacing:0.477px;">25-12-2015</div>
<div class="t" style="font-size:14.4px;color:#000000;top:290.50px;left:242.20px;-webkit-text-stroke:0.15px #000;letter-spacing:0.454px;">42363</div>
<div class="t" style="font-size:14.4px;color:#000000;top:313.00px;left:120.20px;-webkit-text-stroke:0.15px #000;letter-spacing:0.422px;">25-Dec-15</div>
<div class="t" style="font-size:12px;color:#1a1a1a;top:516.45px;left:107.60px;letter-spacing:-0.091px;">Sheet1</div>
<div class="t" style="font-size:10.2px;color:#d8d8d8;top:544.70px;left:9.50px;letter-spacing:-0.531px;">Ready</div>
<div class="t" style="font-size:10.2px;color:#d8d8d8;top:544.70px;left:97.00px;letter-spacing:-0.323px;">Accessibility: Good to go</div>
<div class="t" style="font-size:10.2px;color:#d8d8d8;top:543.80px;left:680.20px;letter-spacing:-0.541px;">100%</div>
</body></html>
